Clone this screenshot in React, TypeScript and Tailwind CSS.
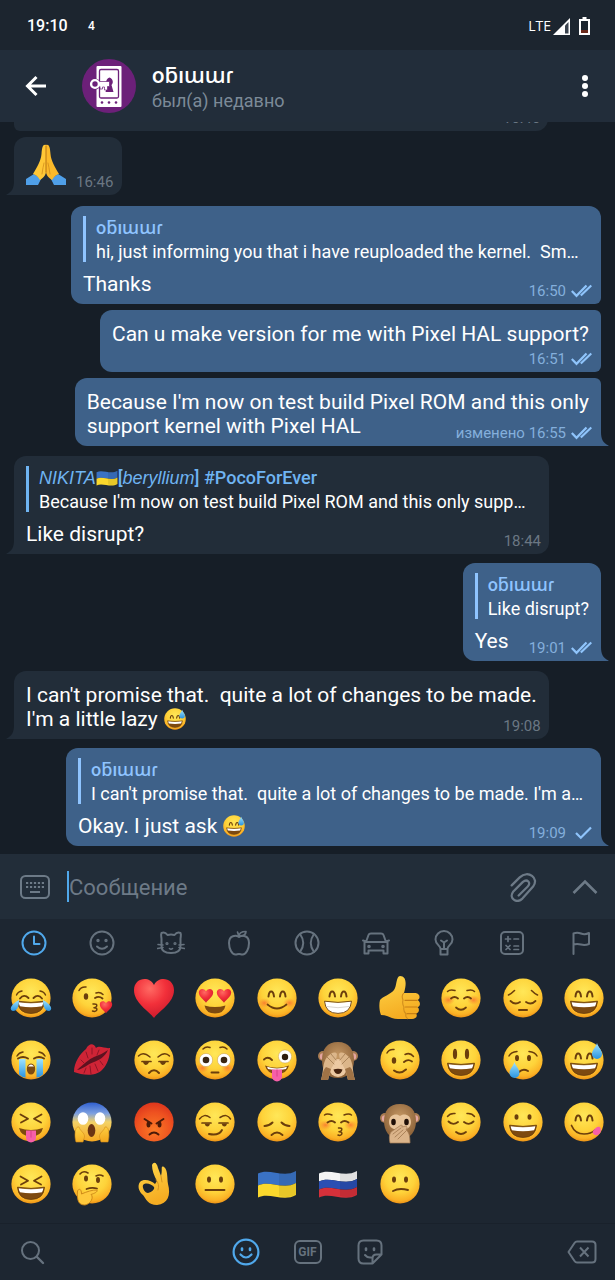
import type { ReactNode } from "react";

const BROWN = "#6b3e0c";

/* ---------- emoji parts ---------- */

function Defs() {
  return (
    <svg width="0" height="0" className="absolute" aria-hidden="true">
      <defs>
        <radialGradient id="skin" cx="0.5" cy="0.34" r="0.68">
          <stop offset="0" stopColor="#ffe758" />
          <stop offset="0.55" stopColor="#fed33a" />
          <stop offset="0.85" stopColor="#fbb125" />
          <stop offset="1" stopColor="#e88a12" />
        </radialGradient>
        <radialGradient id="rage" cx="0.5" cy="0.7" r="0.75">
          <stop offset="0" stopColor="#fb7a26" />
          <stop offset="0.6" stopColor="#ee5120" />
          <stop offset="1" stopColor="#d9301c" />
        </radialGradient>
        <linearGradient id="scream" x1="0" y1="0" x2="0" y2="1">
          <stop offset="0" stopColor="#2f5fd0" />
          <stop offset="0.28" stopColor="#7c9fe0" />
          <stop offset="0.5" stopColor="#f3d267" />
          <stop offset="1" stopColor="#f7a81f" />
        </linearGradient>
        <radialGradient id="heart" cx="0.4" cy="0.25" r="0.8">
          <stop offset="0" stopColor="#ff6a63" />
          <stop offset="0.5" stopColor="#f2303a" />
          <stop offset="1" stopColor="#c9182b" />
        </radialGradient>
        <linearGradient id="tear" x1="0" y1="0" x2="0" y2="1">
          <stop offset="0" stopColor="#9fe3ff" />
          <stop offset="1" stopColor="#2a94e0" />
        </linearGradient>
        <linearGradient id="hand" x1="0" y1="0" x2="0.3" y2="1">
          <stop offset="0" stopColor="#ffd84a" />
          <stop offset="1" stopColor="#f5ac22" />
        </linearGradient>
        <radialGradient id="fur" cx="0.5" cy="0.4" r="0.6">
          <stop offset="0" stopColor="#c79a66" />
          <stop offset="1" stopColor="#8c6239" />
        </radialGradient>
        <radialGradient id="blush">
          <stop offset="0" stopColor="#f9662d" stopOpacity="0.75" />
          <stop offset="1" stopColor="#f9862d" stopOpacity="0" />
        </radialGradient>
      </defs>
    </svg>
  );
}

function Line({ d, w = 1.7, color = BROWN }: { d: string; w?: number; color?: string }) {
  return <path d={d} fill="none" stroke={color} strokeWidth={w} strokeLinecap="round" strokeLinejoin="round" />;
}

function Face({ children, fill = "url(#skin)" }: { children: ReactNode; fill?: string }) {
  return (
    <>
      <circle cx="20" cy="20" r="19.6" fill={fill} />
      {children}
    </>
  );
}

function Dots({ y = 15, dx = 6, rx = 2, ry = 3.1 }: { y?: number; dx?: number; rx?: number; ry?: number }) {
  return (
    <g fill={BROWN}>
      <ellipse cx={20 - dx} cy={y} rx={rx} ry={ry} />
      <ellipse cx={20 + dx} cy={y} rx={rx} ry={ry} />
    </g>
  );
}

function Blush({ y = 25 }: { y?: number }) {
  return (
    <g fill="url(#blush)">
      <ellipse cx="7.5" cy={y} rx="6.5" ry="5" />
      <ellipse cx="32.5" cy={y} rx="6.5" ry="5" />
    </g>
  );
}

const HappyEyes = () => <Line d="M11.5 18.5Q12 13.5 14.2 13.5T17 18.5M23 18.5Q23.6 13.5 25.8 13.5T28.5 18.5" w={2} />;
const SquintEyes = () => <Line d="M9.5 12.5L17 16.8L10 20.5M30.5 12.5L23 16.8L30 20.5" w={1.8} />;

function Grin({ full = false }: { full?: boolean }) {
  return (
    <>
      <path d="M6.5 23.2Q20 25.6 33.5 23.2Q32.5 35.4 20 35.4T6.5 23.2Z" fill={full ? "#fff" : "#7d4a10"} stroke={BROWN} strokeWidth="0.9" />
      {!full && <path d="M7.7 24.2Q20 26.4 32.3 24.2Q32.2 26.2 31 28.3Q20 30 9 28.3Q7.8 26.4 7.7 24.2Z" fill="#fff" />}
      {full && <path d="M8 28.4Q20 31 32 28.4" fill="none" stroke="#c9c4bb" strokeWidth="0.7" />}
    </>
  );
}

function Heart({ x, y, s }: { x: number; y: number; s: number }) {
  return (
    <path
      transform={`translate(${x} ${y}) scale(${s})`}
      d="M0 10C-3 6-10 2-10-4C-10-10-3-11 0-6C3-11 10-10 10-4C10 2 3 6 0 10Z"
      fill="url(#heart)"
    />
  );
}

const Drop = ({ x, y }: { x: number; y: number }) => (
  <path transform={`translate(${x} ${y})`} d="M0-8C1-4 5-1 5 3A5 5 0 0 1-5 3C-5-1-1-4 0-8Z" fill="url(#tear)" />
);

const Tongue = ({ x = 20, y = 28 }: { x?: number; y?: number }) => (
  <>
    <path transform={`translate(${x} ${y})`} d="M-5 0H5V7A5 5 0 0 1-5 7Z" fill="#f75fa8" />
    <path transform={`translate(${x} ${y})`} d="M0 0V7" stroke="#d53c86" strokeWidth="0.9" />
  </>
);

function Flag({ stripes }: { stripes: string[] }) {
  const h = 24 / stripes.length;
  return (
    <>
      {stripes.map((color, i) => {
        const y = 9.5 + i * h;
        return (
          <path key={color} fill={color} d={`M1 ${y}C12 ${y - 6} 26 ${y + 5} 39 ${y - 2.5}V${y + h - 2.5}C26 ${y + h + 5} 12 ${y + h - 6} 1 ${y + h}Z`} />
        );
      })}
      <path d="M22 9C28 10 33 10 39 7V31C33 33 28 34 22 32Z" fill="#000" opacity="0.08" />
    </>
  );
}

function Ears() {
  return (
    <>
      <circle cx="5" cy="16" r="5" fill="#a97c52" />
      <circle cx="35" cy="16" r="5" fill="#a97c52" />
      <circle cx="5" cy="16.5" r="3.2" fill="#e4a5a0" />
      <circle cx="35" cy="16.5" r="3.2" fill="#e4a5a0" />
    </>
  );
}

const EMOJI: Record<string, ReactNode> = {
  joy: (
    <Face>
      <Line d="M5.5 17Q7 13.5 11 13M34.5 17Q33 13.5 29 13" w={1.4} />
      <Line d="M9 20.5Q13 15.5 17.5 20M31 20.5Q27 15.5 22.5 20" w={1.9} />
      <Grin />
      <path d="M8 22C8 29 6 33 2 33C-2 32-1 27 8 22ZM32 22C32 29 34 33 38 33C42 32 41 27 32 22Z" fill="url(#tear)" />
    </Face>
  ),
  kiss: (
    <Face>
      <Line d="M7 12.5Q9 8.5 14 9M24 15Q28 13.5 31 16.5" w={1.5} />
      <ellipse cx="14" cy="18.5" rx="2.2" ry="3.2" fill={BROWN} />
      <Line d="M23 20Q27 17.5 30.5 20.5" w={1.9} />
      <Line d="M21 26Q26 25.5 24.5 28.5Q23.5 29.5 22 29.7Q26 30 24.5 32.5Q23 34 20.5 33" w={1.5} />
      <Heart x={34} y={29} s={0.62} />
    </Face>
  ),
  heart: <path d="M20 40C15 33 0 25 0 12C0 0 15-3 20 7C25-3 40 0 40 12C40 25 25 33 20 40Z" fill="url(#heart)" />,
  loveEyes: (
    <Face>
      <Heart x={11} y={17.5} s={0.72} />
      <Heart x={29} y={17.5} s={0.72} />
      <path d="M9.5 27.5Q20 30.5 30.5 27.5Q29 35.5 20 35.5T9.5 27.5Z" fill="#7d4a10" />
    </Face>
  ),
  blush: (
    <Face>
      <Blush />
      <HappyEyes />
      <Line d="M10.5 26.5Q20 34.5 29.5 26.5" />
    </Face>
  ),
  grin: (
    <Face>
      <HappyEyes />
      <Grin full />
    </Face>
  ),
  thumb: (
    <>
      <path d="M0 22C3 18 10 17 14 12C17 8 16-2 20-2C26-2 27 5 24 15H35.5C40.5 15.5 40.5 21 37.5 22C41 24 40.5 28.5 37.5 29C40 31 39 35 36 35.5C38 38 36 41 32 41H18C11 41 8 37 1 37C-1 32-1 26 0 22Z" fill="url(#hand)" />
      <path d="M24 15Q21 17 23 22Q22 26 24 29Q23 33 26 36Q25 39 28 41" fill="none" stroke="#d08d1d" strokeWidth="1.1" />
      <Line d="M37 22.300H25M37 29H25.500M36 35.600H27" w={1.2} color="#c77f14" />
    </>
  ),
  relaxed: (
    <Face>
      <Blush y={22} />
      <Line d="M6.5 13.5Q9 11 14 12.5M33.5 13.5Q31 11 26 12.5" w={1.5} />
      <Line d="M10 20.5Q13.5 17.5 17 20.5M23 20.5Q26.5 17.5 30 20.5" w={1.9} />
      <Line d="M15 29.5Q20 34 25 29.5" />
    </Face>
  ),
  pensive: (
    <Face>
      <Line d="M5.5 17Q8 16 11.5 12.5M34.5 17Q32 16 28.5 12.5" w={1.6} />
      <Line d="M7.5 23Q12 27.5 17 24M32.5 23Q28 27.5 23 24" w={1.8} />
      <Line d="M16 32H24" w={2} />
    </Face>
  ),
  smile: (
    <Face>
      <HappyEyes />
      <Grin />
    </Face>
  ),
  sob: (
    <Face>
      <Line d="M6 16Q8 12.5 12 12M34 16Q32 12.5 28 12" w={1.5} />
      <path d="M8 19H14.5V37.5Q10.5 37 8 34.5ZM32 19H25.5V37.5Q29.5 37 32 34.5Z" fill="url(#tear)" />
      <Line d="M7 18.5Q12 15.5 17 18.5M33 18.5Q28 15.5 23 18.5" w={1.9} />
      <ellipse cx="20" cy="29" rx="4.2" ry="5.5" fill="#7d4a10" />
      <path d="M17 26.5Q20 22.5 23 26.5Z" fill="#fff" />
    </Face>
  ),
  lips: (
    <>
      <path d="M2 32C2 22 8 14 14 9C17 3 22 3 24 8C28 5 33 9 38 8C38 16 36 24 30 30C23 37 10 35 2 32Z" fill="#cf2436" />
      <path d="M5 30C12 24 17 19 22 17C27 15 32 13 36 10C33 17 27 20 22 22C15 24 12 29 5 30Z" fill="#5d1220" />
      <Line d="M14 12L16 18M20 8L20 14M27 10L25 15M12 33L14 28M19 34L18 26M26 31L23 24M31 25L28 21M9 20L12 23" w={1} color="#8e1526" />
    </>
  ),
  unamused: (
    <Face>
      <Line d="M4.5 16Q9 11 16 17M35.5 16Q31 11 24 17" w={1.5} />
      <Line d="M8 21.5H17M25 21.5H34" w={1.7} />
      <path d="M9 22H15Q14 25 11.5 25Q9.5 24.5 9 22ZM26 22H32Q31 25 28.5 25Q26.5 24.5 26 22Z" fill={BROWN} />
      <Line d="M15 33Q20 27.5 25 33" w={2} />
    </Face>
  ),
  flushed: (
    <Face>
      <Blush y={28} />
      <Line d="M8 9Q11 6 15 7.5M32 9Q29 6 25 7.5" w={1.5} />
      <circle cx="11" cy="20" r="6.6" fill="#fff" stroke="#c99a4a" strokeWidth="0.5" />
      <circle cx="29" cy="20" r="6.6" fill="#fff" stroke="#c99a4a" strokeWidth="0.5" />
      <circle cx="11" cy="20" r="3.3" fill="#3a2512" />
      <circle cx="29" cy="20" r="3.3" fill="#3a2512" />
      <Line d="M16.5 32.5H23.5" w={1.9} />
    </Face>
  ),
  winkTongue: (
    <Face>
      <Line d="M7 19.5Q11 16 15 20" w={1.9} />
      <circle cx="28" cy="16.5" r="6.6" fill="#fff" stroke="#c99a4a" strokeWidth="0.5" />
      <circle cx="28" cy="17" r="3.2" fill="#2d1c0e" />
      <path d="M8 25.5Q20 30 32 25.5Q30 34 20 34T8 25.5Z" fill="#7d4a10" />
      <path d="M10 26.8Q20 30 30 26.8L29 29Q20 31 11 29Z" fill="#fff" />
      <Tongue x={20} y={29.5} />
    </Face>
  ),
  seeNoEvil: (
    <>
      <Ears />
      <path d="M20 2C31 2 36 10 36 20S31 38 20 38S4 31 4 20S9 2 20 2Z" fill="url(#fur)" />
      <ellipse cx="20" cy="28" rx="9" ry="9" fill="#ecc9a2" />
      <path d="M3 40C6 30 4 24 9 17C13 13 17 11 19 14C19 19 16 24 13 29L10 40ZM37 40C34 30 36 24 31 17C27 13 23 11 21 14C21 19 24 24 27 29L30 40Z" fill="#dcb68a" />
      <path d="M3 40C5 33 5 30 8 27L13 29L10 40ZM37 40C35 33 35 30 32 27L27 29L30 40Z" fill="#a07346" />
      <Line d="M9 17L16 24M13 14L18 20M31 17L24 24M27 14L22 20" w={0.8} color="#a07a50" />
      <path d="M15.5 29.5Q20 28 24.5 29.5Q23 34 20 34T15.5 29.5Z" fill="#45230f" />
    </>
  ),
  wink: (
    <Face>
      <Line d="M7 13Q9 9 14 9.5M25 14.5Q30 12 33.5 16.5" w={1.5} />
      <ellipse cx="14" cy="20.5" rx="2.2" ry="3.2" fill={BROWN} />
      <Line d="M24 22Q28 18.5 32 21.5" w={1.9} />
      <Line d="M14 30.5Q20 35 26 29.5" w={2} />
    </Face>
  ),
  bigSmile: (
    <Face>
      <Dots y={14} ry={5.2} rx={2.1} />
      <Grin />
    </Face>
  ),
  cry: (
    <Face>
      <Line d="M6 16Q8 12 14 11.5M34 16Q32 12 26 11.5" w={1.5} />
      <Dots y={18} />
      <Line d="M16 32Q20 28 25 31" w={1.9} />
      <Drop x={11.5} y={30} />
    </Face>
  ),
  sweat: (
    <Face>
      <HappyEyes />
      <Grin />
      <Drop x={33} y={11} />
    </Face>
  ),
  squintTongue: (
    <Face>
      <SquintEyes />
      <path d="M8 26Q20 30 32 26Q30 34.5 20 34.5T8 26Z" fill="#7d4a10" />
      <Tongue y={28.5} />
    </Face>
  ),
  scream: (
    <Face fill="url(#scream)">
      <ellipse cx="11" cy="16.5" rx="5.3" ry="6.3" fill="#fff" />
      <ellipse cx="28" cy="16.5" rx="5.3" ry="6.3" fill="#fff" />
      <ellipse cx="19.5" cy="28.5" rx="3.8" ry="6.5" fill="#6b3413" />
      <path d="M4 40C2 33 3 24 7 25C8 29 13 31 12.5 35L11 40ZM36 40C38 33 37 24 33 25C32 29 27 31 27.5 35L29 40Z" fill="url(#hand)" stroke="#d18a18" strokeWidth="0.6" />
    </Face>
  ),
  rage: (
    <Face fill="url(#rage)">
      <Line d="M10.5 17L17.5 21.5M29.5 17L22.5 21.5" w={1.9} color="#4a1a08" />
      <ellipse cx="14.5" cy="22.5" rx="2" ry="2.9" fill="#4a1a08" />
      <ellipse cx="25.5" cy="22.5" rx="2" ry="2.9" fill="#4a1a08" />
      <Line d="M15.5 32.5Q20 28.5 24.5 32.5" w={1.9} color="#4a1a08" />
    </Face>
  ),
  smirk: (
    <Face>
      <Line d="M4.5 17Q9 11 15 15.5M35.5 17Q32 11 25 15.5" w={1.5} />
      <Line d="M7 21H16M24 21H33" w={1.7} />
      <path d="M9.5 21.5H15Q14.5 24.5 12.5 24.5Q10 24 9.5 21.5ZM26.5 21.5H32Q31.5 24.5 29.5 24.5Q27 24 26.5 21.5Z" fill={BROWN} />
      <Line d="M14 32Q24 34 27 28" w={1.9} />
    </Face>
  ),
  disappointed: (
    <Face>
      <Line d="M7.5 24Q12 24 15.5 20.5M32.5 24Q28 24 24.5 20.5" w={2} />
      <Line d="M14.5 33Q20 28 25.5 33" w={1.9} />
    </Face>
  ),
  kissClosed: (
    <Face>
      <Blush y={23} />
      <Line d="M6.5 13Q9 11 14 13M33.5 13Q31 11 26 13" w={1.5} />
      <Line d="M9.5 20.5Q13.5 17.5 17 20.5M23 20.5Q26.5 17.5 30.5 20.5" w={1.9} />
      <Line d="M20.5 26Q25 25.5 23.5 28.5Q22.5 29.5 21 29.7Q25 30 23.5 32.5Q22 34 20 33" w={1.5} />
    </Face>
  ),
  speakNoEvil: (
    <>
      <Ears />
      <path d="M20 2C31 2 36 9 36 19S31 37 20 37S4 29 4 19S9 2 20 2Z" fill="url(#fur)" />
      <path d="M20 14C23 11 31 12 31 20C31 26 26 28 20 28S9 26 9 20C9 12 17 11 20 14Z" fill="#e8c59c" />
      <ellipse cx="13.5" cy="20" rx="2.3" ry="3.3" fill="#201008" />
      <ellipse cx="26.500" cy="20" rx="2.3" ry="3.3" fill="#201008" />
      <path d="M10 41C9 36 9 33 11 30L21 23Q23 23 22 25L26 24Q28 25 26 28C29 30 30 34 30 41Z" fill="#dbb48a" stroke="#a57d55" strokeWidth="0.7" />
      <Line d="M13 32L21 26M15 35L23 28M18 37L26 29" w={0.9} color="#a57d55" />
    </>
  ),
  relieved: (
    <Face>
      <Line d="M6.5 14.5Q9 11 14 11.5M33.5 14.5Q31 11 26 11.5" w={1.5} />
      <Line d="M7.5 19.5Q12 24 17 20M32.5 19.5Q28 24 23 20" w={1.9} />
      <Line d="M15 30Q20 34 25 30" w={1.8} />
    </Face>
  ),
  happy: (
    <Face>
      <Dots y={15} dx={6.5} ry={2.8} />
      <Grin />
    </Face>
  ),
  yum: (
    <Face>
      <HappyEyes />
      <Line d="M7.5 23.5Q11 32 20 32Q27 32 31 28" w={1.7} />
      <path d="M29 29C31 26 35 23 36.5 26C38 30 35 34 31 33C29 32 28.5 31 29 29Z" fill="#f75fa8" />
    </Face>
  ),
  laugh: (
    <Face>
      <SquintEyes />
      <Grin />
    </Face>
  ),
  think: (
    <Face>
      <Line d="M8 10Q11 6 16 9M24 12Q28 10 31 12" w={1.6} />
      <ellipse cx="14" cy="14.5" rx="2" ry="3" fill={BROWN} />
      <ellipse cx="26" cy="16" rx="2" ry="3" fill={BROWN} />
      <Line d="M14.5 25Q20 23 25 24.5" w={1.8} />
      <path d="M5.5 27C7 24 9.5 25 9.5 30C14 28 21 25.5 25 26C26 28 22 29.5 19 30.5C22 33 19 40 13 41C6 41 5 36 5.5 27Z" fill="#ffc93c" stroke="#c98416" strokeWidth="0.9" />
    </Face>
  ),
  ok: (
    <>
      <path d="M18 1C20-3 23-1 24 4L27 12C29 6 26 1 30 3C34 6 33 14 34 20C37 31 34 40 23 41C14 41 12 35 9 31C5 28 3 22 6 18C10 14 18 17 21 20L23 17C20 12 18 6 18 1ZM9 21C8 24 11 29 14 29C18 28 21 25 20 23C17 20 12 18 9 21Z" fillRule="evenodd" fill="url(#hand)" />
      <Line d="M27 12L28 18M22 16Q26 20 24 26" w={0.9} color="#d08d1d" />
    </>
  ),
  neutral: (
    <Face>
      <Dots y={15.5} />
      <Line d="M10.5 26H29.5" w={1.9} />
    </Face>
  ),
  ukraine: <Flag stripes={["#3a72c4", "#fbd82c"]} />,
  russia: <Flag stripes={["#f4f4f4", "#2a4fb3", "#d5303a"]} />,
  confused: (
    <Face>
      <Dots y={15.5} />
      <Line d="M13 27Q19 23.5 28 26" w={1.9} />
    </Face>
  ),
  pray: (
    <>
      <path d="M0 34L8 29L15 34L12 40H0ZM40 34L32 29L25 34L28 40H40Z" fill="#4f9fe8" />
      <path d="M20 0C17-1 16 2 15.5 9C15 16 11 22 7 29Q11 30 14 35C18 32 20 30 20 26Z" fill="#ffc736" />
      <path d="M20 0C23-1 24 2 24.5 9C25 16 29 22 33 29Q29 30 26 35C22 32 20 30 20 26Z" fill="#fbb92a" />
      <Line d="M20 1V27" w={1} color="#b87412" />
      <Line d="M16 29Q17 22 18 18M24 29Q23 22 22 18" w={0.8} color="#d08d1d" />
    </>
  ),
};

function Emoji({ name, className = "size-10" }: { name: string; className?: string }) {
  return (
    <svg viewBox="0 0 40 40" className={`${className} shrink-0 overflow-visible`} aria-hidden="true">
      {EMOJI[name]}
    </svg>
  );
}

const RECENT = [
  "joy", "kiss", "heart", "loveEyes", "blush", "grin", "thumb", "relaxed", "pensive", "smile",
  "sob", "lips", "unamused", "flushed", "winkTongue", "seeNoEvil", "wink", "bigSmile", "cry", "sweat",
  "squintTongue", "scream", "rage", "smirk", "disappointed", "kissClosed", "speakNoEvil", "relieved", "happy", "yum",
  "laugh", "think", "ok", "neutral", "ukraine", "russia", "confused",
];

/* ---------- outline icons ---------- */

function Icon({ children, className = "size-7", w = 2 }: { children: ReactNode; className?: string; w?: number }) {
  return (
    <svg
      viewBox="0 0 28 28"
      className={className}
      fill="none"
      stroke="currentColor"
      strokeWidth={w}
      strokeLinecap="round"
      strokeLinejoin="round"
      aria-hidden="true"
    >
      {children}
    </svg>
  );
}

const CATEGORIES: { label: string; icon: ReactNode }[] = [
  { label: "Recent", icon: <><circle cx="14" cy="14" r="11.5" /><path d="M14 7.5V15H19.5" /></> },
  {
    label: "Smileys",
    icon: (
      <>
        <circle cx="14" cy="14" r="11.5" />
        <path d="M9 17.5Q14 22 19 17.5" />
        <circle cx="10" cy="11.5" r="0.7" fill="currentColor" />
        <circle cx="18" cy="11.5" r="0.7" fill="currentColor" />
      </>
    ),
  },
  {
    label: "Animals",
    icon: (
      <>
        <path d="M4.5 4C7 3 9 4 10.5 6Q14 5 17.5 6C19 4 21 3 23.5 4C24.5 6 23.5 8 23.5 10V17C23.5 22 20 24 14 24S4.5 22 4.5 17V10C4.5 8 3.5 6 4.5 4Z" />
        <path d="M1 15.5L6 16M0.5 19.5L6 18.5M27 15.5L22 16M27.5 19.5L22 18.5M12.5 19.5Q14 21 15.5 19.5" strokeWidth="1.6" />
        <circle cx="10" cy="14.5" r="0.6" fill="currentColor" />
        <circle cx="18" cy="14.5" r="0.6" fill="currentColor" />
      </>
    ),
  },
  {
    label: "Food",
    icon: (
      <>
        <path d="M14 8C11 6 4 6 4 14C4 20 7 25.5 10.5 25.5C12 25.5 12.5 25 14 25S16 25.5 17.5 25.5C21 25.5 24 20 24 14C24 6 17 6 14 8Z" />
        <path d="M14 7.5C14 4 17 2.5 21 2.5C21 5.5 19 7 14 7.5ZM12.5 3L14 7.5" strokeWidth="1.7" />
      </>
    ),
  },
  {
    label: "Activity",
    icon: <><circle cx="14" cy="14" r="11.5" /><path d="M7 5Q13.5 14 7 23M21 5Q14.5 14 21 23" /></>,
  },
  {
    label: "Travel",
    icon: (
      <>
        <path d="M4 13L6.5 6Q7 4.5 9 4.5H19Q21 4.5 21.5 6L24 13M2.5 13H25.5V24.5H21.5V21.5H6.5V24.5H2.5ZM1 11.5L4 12.5M27 11.5L24 12.5" />
        <circle cx="7" cy="17.5" r="0.8" fill="currentColor" />
        <circle cx="21" cy="17.5" r="0.8" fill="currentColor" />
      </>
    ),
  },
  {
    label: "Objects",
    icon: (
      <path d="M10.5 20C10.5 16.5 5.5 15.5 5.5 10.5A8.5 8.5 0 0 1 22.5 10.5C22.5 15.5 17.5 16.5 17.5 20ZM10.5 20V25.5H17.5V20M11 11.5L14 13.5L17 11.5M14 13.5V20" />
    ),
  },
  {
    label: "Symbols",
    icon: (
      <>
        <rect x="3" y="3" width="22" height="22" rx="4" />
        <path d="M7.5 10H12.5M10 7.5V12.5M16 10H20.5M8 16.5L12 20.5M12 16.5L8 20.5M16 17H20.5M16 20.5H20.5" strokeWidth="1.7" />
      </>
    ),
  },
  { label: "Flags", icon: <path d="M6.5 25V4.5Q10 3 14 4.5T22 4V15Q18 16.5 14 15.5T6.5 15.5" /> },
];

function Checks({ double }: { double: boolean }) {
  return (
    <svg viewBox="0 0 21 14" className="h-3.5 w-[21px]" fill="none" stroke="#8fc4fb" strokeWidth="2.2" aria-hidden="true">
      {double ? (
        <>
          <path d="M0.8 7L5.5 11.8L15.5 1.5" />
          <path d="M9.8 11.5L20.3 1.5" />
        </>
      ) : (
        <path d="M5 7L9.8 11.8L20 1.5" />
      )}
    </svg>
  );
}

/* ---------- messages ---------- */

const CONTACT = "oƃıɯɯɾ";

type Message = {
  out?: boolean;
  // margin above, corners and, for long quotes, the least width
  box: string;
  tail?: boolean;
  reply?: { name: ReactNode; text: string };
  lines: ReactNode[];
  time: string;
  edited?: boolean;
  single?: boolean;
  // time on a line of its own, under the text
  timeBelow?: boolean;
};

const smallSweat = <Emoji name="sweat" className="ml-1.5 inline-block size-[22px] align-[-4px]" />;

const MESSAGES: Message[] = [
  {
    out: true,
    box: "mt-[11px] min-w-[530px] rounded-xl rounded-br-md",
    reply: { name: CONTACT, text: "hi, just informing you that i have reuploaded the kernel.  Sm…" },
    lines: ["Thanks"],
    time: "16:50",
  },
  {
    out: true,
    box: "mt-1.5 rounded-xl rounded-r-md",
    lines: ["Can u make version for me with Pixel HAL support?"],
    time: "16:51",
    timeBelow: true,
  },
  {
    out: true,
    box: "mt-1.5 rounded-xl rounded-tr-md rounded-br-none",
    tail: true,
    lines: ["Because I'm now on test build Pixel ROM and this only", "support kernel with Pixel HAL"],
    time: "16:55",
    edited: true,
  },
  {
    box: "mt-2.5 min-w-[535px] rounded-xl rounded-bl-none",
    tail: true,
    reply: {
      name: (
        <>
          <i className="font-['Liberation_Sans',sans-serif]">NIKITA</i>
          <Emoji name="ukraine" className="inline-block size-[22px] align-[-5px]" />
          [<i className="font-['Liberation_Sans',sans-serif]">beryllium</i>] #PocoForEver
        </>
      ),
      text: "Because I'm now on test build Pixel ROM and this only supp…",
    },
    lines: ["Like disrupt?"],
    time: "18:44",
  },
  {
    out: true,
    box: "mt-[9px] rounded-xl rounded-br-none",
    tail: true,
    reply: { name: CONTACT, text: "Like disrupt?" },
    lines: ["Yes"],
    time: "19:01",
  },
  {
    box: "mt-2.5 rounded-xl rounded-bl-none",
    tail: true,
    lines: ["I can't promise that.  quite a lot of changes to be made.", <>I'm a little lazy{smallSweat}</>],
    time: "19:08",
  },
  {
    out: true,
    box: "mt-[9px] min-w-[535px] rounded-xl rounded-br-none",
    tail: true,
    reply: { name: CONTACT, text: "I can't promise that.  quite a lot of changes to be made. I'm a…" },
    lines: [<>Okay. I just ask{smallSweat}</>],
    time: "19:09",
    single: true,
  },
];

function Tail({ out }: { out?: boolean }) {
  return out ? (
    <svg viewBox="0 0 8 14" className="absolute bottom-0 left-full h-3.5 w-2" aria-hidden="true">
      <path d="M0 0C0 7 2 11 7.5 13.5V14H0Z" fill="#3e6189" />
    </svg>
  ) : (
    <svg viewBox="0 0 8 14" className="absolute right-full bottom-0 h-3.5 w-2" aria-hidden="true">
      <path d="M8 0C8 7 6 11 0.5 13.5V14H8Z" fill="#222d39" />
    </svg>
  );
}

function Bubble({ m }: { m: Message }) {
  const last = m.lines[m.lines.length - 1];
  const rest = m.lines.slice(0, -1);

  const meta = (
    <span
      className={
        m.out
          ? "-mr-[3px] flex items-center gap-[5px] text-[15px] leading-[18px] text-[#84afdc]"
          : "-mr-1 text-[15px] leading-[18px] text-[#6b7783]"
      }
    >
      {m.edited ? `изменено ${m.time}` : m.time}
      {m.out && <Checks double={!m.single} />}
    </span>
  );

  return (
    <article
      className={`relative w-fit max-w-full whitespace-pre pr-3 pb-1 pl-3 text-[21px] leading-6 text-white ${m.reply ? "pt-2.5" : "pt-3"} ${m.out ? "self-end bg-[#3e6189]" : "self-start bg-[#222d39]"} ${m.box}`}
    >
      {m.tail && <Tail out={m.out} />}
      {m.reply && (
        <blockquote className="mb-2 flex gap-2.5 text-lg leading-6">
          <span className={`h-[46px] w-[3px] ${m.out ? "bg-[#8fc4ff]" : "bg-[#6fb4f2]"}`} />
          <div>
            <div className={`h-6 font-medium ${m.out ? "text-[#8fc4ff]" : "text-[#6fb4f2]"}`}>{m.reply.name}</div>
            <div className="h-6">{m.reply.text}</div>
          </div>
        </blockquote>
      )}
      {rest.map((line, i) => (
        <div key={i} className="h-6">{line}</div>
      ))}
      {m.timeBelow ? (
        <>
          <div className="h-6">{last}</div>
          <div className="mt-1 flex justify-end">{meta}</div>
        </>
      ) : (
        <div className="flex items-end justify-between gap-5">
          <div className="mb-1 h-6">{last}</div>
          {meta}
        </div>
      )}
    </article>
  );
}

/* ---------- page ---------- */

function StatusBar() {
  return (
    <div className="flex h-[50px] shrink-0 items-center bg-[#1c252f] pt-0.5 pr-[25px] pl-[27px] text-white">
      <span className="w-[43px] text-base font-medium">19:10</span>
      <span className="ml-[18px] text-xs font-medium">4</span>
      <span className="ml-auto font-['Open_Sans',sans-serif] text-sm">LTE</span>
      <svg viewBox="0 0 17 17" className="ml-0.5 size-[17px]" aria-hidden="true">
        <path d="M17 0V17H0Z" fill="#fff" />
        <path d="M15.5 4V15.5H12V7.5Z" fill="#3a434e" />
      </svg>
      <svg viewBox="0 0 11 18" className="ml-[9px] h-[18px] w-[11px]" aria-hidden="true">
        <path d="M3.5 0H7.5V2H11V18H0V2H3.5Z" fill="#fff" />
        <path d="M2 4H9V16H2Z" fill="#1c252f" />
        <path d="M2 13H9V16H2Z" fill="#6b2a1c" />
      </svg>
    </div>
  );
}

function Avatar() {
  return (
    <svg viewBox="0 0 54 54" className="size-[54px]" aria-hidden="true">
      <circle cx="27" cy="27" r="27" fill="#6c2079" />
      <rect x="14.5" y="7" width="25" height="41" rx="1" fill="#fff" />
      <rect x="17.5" y="10.5" width="19" height="28.5" rx="1.5" fill="none" stroke="#6c2079" strokeWidth="1.3" />
      <path d="M27.5 18.5A4.5 4.5 0 0 1 29.5 26L31.5 33H23.5L25.5 26A4.5 4.5 0 0 1 27.5 18.5Z" fill="#6c2079" />
      <circle cx="13" cy="25" r="5.6" fill="#6c2079" />
      <path d="M17 22.5H27.5V27.500H25.5V31H22.5V28H20.5V30H18V27.500H17Z" fill="#fff" stroke="#6c2079" strokeWidth="0.7" />
      <circle cx="13" cy="25" r="3.9" fill="#6c2079" stroke="#fff" strokeWidth="2.4" />
      <circle cx="20" cy="43.5" r="1.3" fill="#6c2079" />
      <circle cx="27" cy="43.5" r="1.3" fill="#6c2079" />
      <circle cx="34" cy="43.5" r="1.3" fill="#6c2079" />
    </svg>
  );
}

function Header() {
  return (
    <header className="flex h-[72px] shrink-0 items-center bg-[#222d3a] pr-5 pl-[22px] text-white">
      <button type="button" aria-label="Back">
        <Icon w={3}>
          <path d="M24 14H6.5M14.5 5L5.5 14L14.5 23" strokeLinecap="butt" strokeLinejoin="miter" />
        </Icon>
      </button>
      <div className="ml-8">
        <Avatar />
      </div>
      <div className="ml-4 flex-1 pt-[3px]">
        <h1 className="text-[22px] leading-[26px] font-medium">{CONTACT}</h1>
        <p className="text-lg leading-6 text-[#7c8a98]">был(а) недавно</p>
      </div>
      <button type="button" aria-label="Menu" className="flex w-5 flex-col items-center gap-0.5">
        <span className="size-1.5 rounded-full bg-white" />
        <span className="size-1.5 rounded-full bg-white" />
        <span className="size-1.5 rounded-full bg-white" />
      </button>
    </header>
  );
}

function Composer() {
  return (
    <form className="flex h-[65px] shrink-0 items-center bg-[#222d39] px-4 text-[#6d7a87]">
      <button type="button" aria-label="Keyboard" className="px-1">
        <svg viewBox="0 0 30 24" className="h-6 w-[30px]" fill="none" stroke="currentColor" strokeWidth="2" aria-hidden="true">
          <rect x="1" y="1" width="28" height="22" rx="4.5" />
          <path d="M6 8H24M6 12H24" strokeDasharray="2.2 1.75" />
          <path d="M10 17H20" />
        </svg>
      </button>
      <span className="ml-[13px] h-[31px] w-0.5 bg-[#50a8eb]" />
      <input
        type="text"
        aria-label="Сообщение"
        placeholder="Сообщение"
        className="min-w-0 flex-1 bg-transparent pt-0.5 text-[22px] text-white outline-none placeholder:text-[#6d7a87]"
      />
      <button type="button" aria-label="Attach">
        <Icon className="size-[30px]" w={2.1}>
          <path d="M2.5 12.5L10 5C18-2.500 28.500 6 22.5 13.5L12.5 24.8C7 30 -0.5 24.5 3.8 18.5L13 9.2C17 6 21 10 17.5 13.5L9 22" />
        </Icon>
      </button>
      <button type="button" aria-label="Expand" className="ml-8">
        <Icon w={2.6}>
          <path d="M2.5 20L14 8.5L25.5 20" strokeLinecap="butt" strokeLinejoin="miter" />
        </Icon>
      </button>
    </form>
  );
}

function EmojiPanel() {
  return (
    <section className="shrink-0 bg-[#1d2631] text-[#66727e]">
      <nav className="grid h-12 grid-cols-9 place-items-center">
        {CATEGORIES.map(({ label, icon }, i) => (
          <button key={label} type="button" aria-label={label} className={i === 0 ? "text-[#50a8eb]" : ""}>
            <Icon className="size-7">{icon}</Icon>
          </button>
        ))}
      </nav>
      <div className="grid auto-rows-[62px] grid-cols-10 place-items-center">
        {RECENT.map((name) => (
          <button key={name} type="button" aria-label={name}>
            <Emoji name={name} />
          </button>
        ))}
      </div>
      <div className="mt-2 grid h-[57px] grid-cols-[1fr_auto_1fr] items-center border-t border-[#19212b] px-[18px]">
        <button type="button" aria-label="Search" className="justify-self-start">
          <Icon>
            <circle cx="12.5" cy="12.5" r="8.5" />
            <path d="M19 19L25 25" strokeWidth="2.4" />
          </Icon>
        </button>
        <div className="flex gap-[34px]">
          <button type="button" aria-label="Emoji" className="text-[#50a8eb]">
            <Icon w={2.2}>
              <circle cx="14" cy="14" r="12.4" />
              <path d="M8.5 16.5Q14 22.5 19.5 16.5" />
              <path d="M10 10.5V12M18 10.5V12" strokeWidth="2.6" />
            </Icon>
          </button>
          <button type="button" className="grid h-6 w-7 place-items-center self-center rounded-md border-2 border-current text-xs leading-none font-bold">
            GIF
          </button>
          <button type="button" aria-label="Stickers">
            <Icon>
              <path d="M25.5 16.5V7.5Q25.5 2.5 20.5 2.5H7.5Q2.5 2.5 2.5 7.5V20.5Q2.5 25.5 7.5 25.5H16.5ZM25.5 16.5H20.5Q16.5 16.5 16.5 20.5V25.5M9 17Q11.5 20 15 19.5" />
              <path d="M10 10.5V12M18 10.5V12" strokeWidth="2.6" />
            </Icon>
          </button>
        </div>
        <button type="button" aria-label="Delete" className="justify-self-end">
          <svg viewBox="0 0 30 24" className="h-6 w-[30px]" fill="none" stroke="currentColor" strokeWidth="2" strokeLinejoin="round" aria-hidden="true">
            <path d="M10 1.5H25Q28.5 1.5 28.5 5V19Q28.5 22.5 25 22.5H10Q8.500 22.5 7.5 21L1.5 12L7.5 3Q8.5 1.5 10 1.5Z" />
            <path d="M13 7.5L21.5 16.5M21.5 7.5L13 16.5" />
          </svg>
        </button>
      </div>
    </section>
  );
}

export default function App() {
  return (
    <div className="flex h-screen flex-col overflow-hidden bg-[#161e27] font-[Roboto,'Noto_Sans',sans-serif]">
      <Defs />
      <StatusBar />
      <Header />
      <main className="flex min-h-0 flex-1 flex-col justify-end overflow-hidden px-3.5 pb-2">
        <article className="w-[91%] shrink-0 rounded-xl rounded-bl-md bg-[#222d39] pt-3 pr-2 pb-1 text-right text-[15px] leading-[18px] text-[#6b7783]">
          16:46
        </article>
        <article className="relative mt-1.5 flex w-fit shrink-0 items-end gap-2.5 rounded-xl rounded-bl-none bg-[#222d39] pt-2 pr-[9px] pb-1 pl-3">
          <Tail />
          <Emoji name="pray" className="mb-1.5 size-10" />
          <span className="text-[15px] leading-[18px] text-[#6b7783]">16:46</span>
        </article>
        {MESSAGES.map((m) => (
          <Bubble key={m.time} m={m} />
        ))}
      </main>
      <Composer />
      <EmojiPanel />
    </div>
  );
}
